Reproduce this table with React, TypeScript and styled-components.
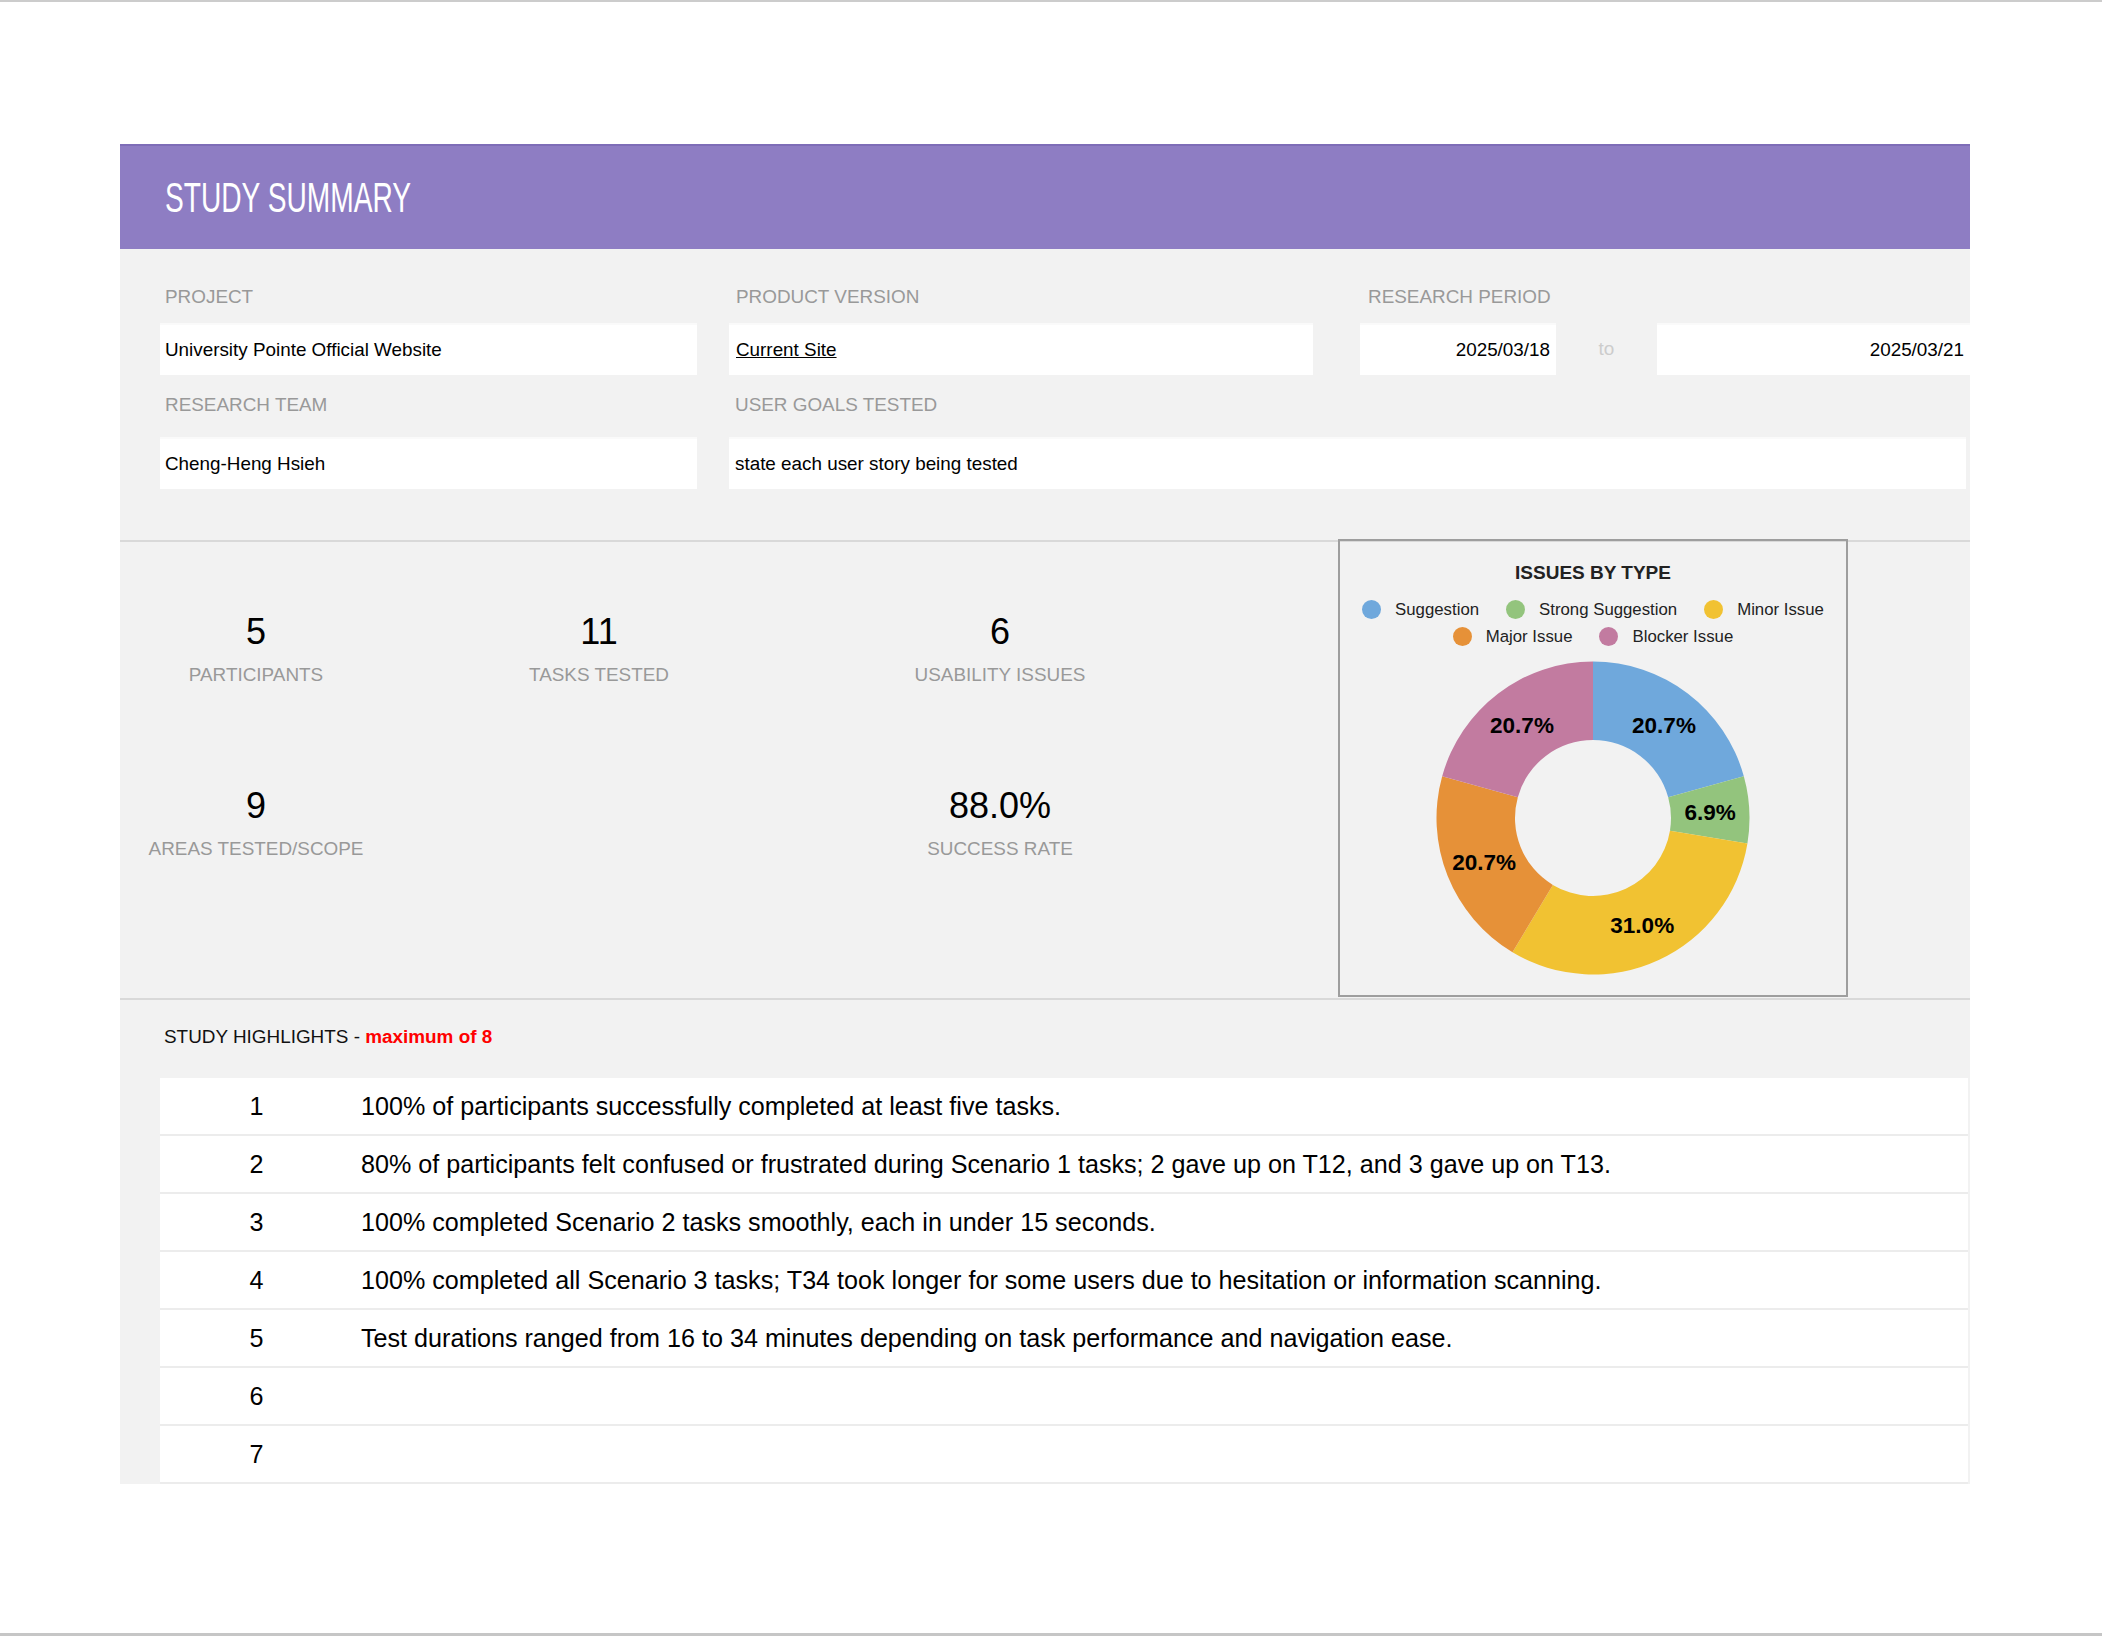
import React from 'react';
import styled, { createGlobalStyle } from 'styled-components';

const GlobalStyle = createGlobalStyle`
  html, body {
    margin: 0;
    padding: 0;
    background: #ffffff;
  }
  body {
    font-family: 'Liberation Sans', Arial, sans-serif;
    color: #000;
  }
`;

const Page = styled.div`
  min-height: 100vh;
  box-sizing: border-box;
  border-top: 2px solid #cccccc;
  border-bottom: 3px solid #c6c6c6;
  padding: 142px 0 0 120px;
`;

const Sheet = styled.div`
  width: 1850px;
  background: #f2f2f2;
`;

const Header = styled.div`
  height: 105px;
  box-sizing: border-box;
  background: #8e7dc3;
  border-top: 2px solid #7e6db7;
  display: flex;
  align-items: center;
  padding-left: 45px;
`;

const Title = styled.h1`
  margin: 0;
  font-size: 42px;
  font-weight: 400;
  line-height: 1;
  color: #ffffff;
  white-space: nowrap;
  transform: scaleX(0.67);
  transform-origin: left center;
`;

/* ---------- project info ---------- */

const Info = styled.div`
  padding: 37px 0 51px 40px;
`;

const FieldRow = styled.div<{ $top?: number }>`
  display: flex;
  gap: 32px;
  margin-top: ${p => p.$top ?? 0}px;
`;

const Field = styled.div<{ $w?: number; $ml?: number; $pad?: number }>`
  width: ${p => (p.$w ? `${p.$w}px` : 'auto')};
  margin-left: ${p => p.$ml ?? 0}px;
  --pad: ${p => p.$pad ?? 5}px;
`;

const Label = styled.div<{ $gap: number }>`
  font-size: 18.9px;
  line-height: 22px;
  color: #999999;
  padding-left: var(--pad);
  margin-bottom: ${p => p.$gap}px;
  white-space: nowrap;
`;

const ValueBox = styled.div<{ $w?: number; $right?: boolean }>`
  width: ${p => (p.$w ? `${p.$w}px` : '100%')};
  height: 52px;
  box-sizing: border-box;
  background: #ffffff;
  border-top: 2px solid #fafafa;
  display: flex;
  align-items: center;
  justify-content: ${p => (p.$right ? 'flex-end' : 'flex-start')};
  padding: 0 ${p => (p.$right ? '6px' : '0')} 0 ${p => (p.$right ? '0' : 'var(--pad)')};
  font-size: 18.85px;
  color: #000;
  white-space: nowrap;
`;

const LinkText = styled.span`
  text-decoration: underline;
`;

const PeriodRow = styled.div`
  display: flex;
`;

const ToSep = styled.div`
  width: 101px;
  height: 52px;
  display: flex;
  align-items: center;
  justify-content: center;
  font-size: 18.9px;
  color: #cccccc;
`;

/* ---------- stats + chart ---------- */

const Stats = styled.div`
  display: flex;
  height: 460px;
  box-sizing: border-box;
  border-top: 2px solid #d9d9d9;
  border-bottom: 2px solid #d9d9d9;
`;

const StatGrid = styled.div`
  flex: 0 0 1218px;
  display: grid;
  grid-template-columns: 272px 414px 388px;
  grid-auto-rows: 174px;
  padding-top: 72px;
  box-sizing: border-box;
`;

const StatCell = styled.div`
  display: flex;
  flex-direction: column;
  align-items: center;
`;

const StatNumber = styled.div`
  font-size: 36px;
  line-height: 1;
  color: #000;
`;

const StatLabel = styled.div`
  margin-top: 16px;
  font-size: 18.9px;
  line-height: 1;
  color: #999999;
  white-space: nowrap;
`;

const ChartBox = styled.div`
  width: 510px;
  height: 458px;
  margin-top: -3px;
  box-sizing: border-box;
  border: 2px solid #9e9e9e;
  padding-top: 22px;
  display: flex;
  flex-direction: column;
  align-items: center;
`;

const ChartTitle = styled.div`
  font-size: 19px;
  line-height: 19px;
  font-weight: 700;
  color: #222;
`;

const Legend = styled.div`
  margin-top: 14px;
  display: flex;
  flex-direction: column;
  align-items: center;
`;

const LegendRow = styled.div`
  display: flex;
  gap: 27px;
  height: 27px;
  align-items: center;
`;

const LegendItem = styled.div`
  display: flex;
  align-items: center;
  gap: 14px;
  font-size: 16.8px;
  color: #222;
  white-space: nowrap;
`;

const Dot = styled.span<{ $c: string }>`
  width: 19px;
  height: 19px;
  border-radius: 50%;
  background: ${p => p.$c};
  flex-shrink: 0;
`;

const Donut = styled.svg`
  margin-top: 8px;
  display: block;
`;

/* ---------- highlights ---------- */

const HighlightsHead = styled.div`
  height: 78px;
  box-sizing: border-box;
  padding: 26px 0 0 44px;
  font-size: 18.9px;
  line-height: 22px;
  color: #111;
`;

const Red = styled.span`
  color: #ff0000;
  font-weight: 700;
`;

const Table = styled.div`
  margin-left: 40px;
  width: 1808px;
`;

const Row = styled.div`
  display: flex;
  height: 58px;
  box-sizing: border-box;
  background: #ffffff;
  border-bottom: 2px solid #ececec;
`;

const NumCell = styled.div`
  width: 193px;
  flex-shrink: 0;
  display: flex;
  align-items: center;
  justify-content: center;
  font-size: 25.15px;
`;

const TextCell = styled.div`
  flex: 1;
  display: flex;
  align-items: center;
  padding-left: 8px;
  font-size: 25.15px;
  white-space: nowrap;
`;

const SEGMENTS = [
  { name: 'Suggestion', value: 20.7, color: '#6fa8dc' },
  { name: 'Strong Suggestion', value: 6.9, color: '#93c47d' },
  { name: 'Minor Issue', value: 31.0, color: '#f1c232' },
  { name: 'Major Issue', value: 20.7, color: '#e69138' },
  { name: 'Blocker Issue', value: 20.7, color: '#c27ba0' },
];

const HIGHLIGHTS = [
  '100% of participants successfully completed at least five tasks.',
  '80% of participants felt confused or frustrated during Scenario 1 tasks; 2 gave up on T12, and 3 gave up on T13.',
  '100% completed Scenario 2 tasks smoothly, each in under 15 seconds.',
  '100% completed all Scenario 3 tasks; T34 took longer for some users due to hesitation or information scanning.',
  'Test durations ranged from 16 to 34 minutes depending on task performance and navigation ease.',
  '',
  '',
];

const CX = 160;
const CY = 160;
const R_OUT = 156.5;
const R_IN = 78;

function pt(r: number, frac: number) {
  const a = frac * Math.PI * 2;
  return [CX + r * Math.sin(a), CY - r * Math.cos(a)];
}

function slicePath(from: number, to: number) {
  const large = to - from > 0.5 ? 1 : 0;
  const [x1, y1] = pt(R_OUT, from);
  const [x2, y2] = pt(R_OUT, to);
  const [x3, y3] = pt(R_IN, to);
  const [x4, y4] = pt(R_IN, from);
  return `M${x1} ${y1} A${R_OUT} ${R_OUT} 0 ${large} 1 ${x2} ${y2} L${x3} ${y3} A${R_IN} ${R_IN} 0 ${large} 0 ${x4} ${y4} Z`;
}

function IssuesChart() {
  const total = SEGMENTS.reduce((s, d) => s + d.value, 0);
  let acc = 0;
  const slices = SEGMENTS.map(d => {
    const from = acc / total;
    acc += d.value;
    const to = acc / total;
    const [lx, ly] = pt((R_OUT + R_IN) / 2, (from + to) / 2);
    return { ...d, from, to, lx, ly };
  });

  return (
    <ChartBox>
      <ChartTitle>ISSUES BY TYPE</ChartTitle>
      <Legend>
        <LegendRow>
          {SEGMENTS.slice(0, 3).map(s => (
            <LegendItem key={s.name}>
              <Dot $c={s.color} />
              {s.name}
            </LegendItem>
          ))}
        </LegendRow>
        <LegendRow>
          {SEGMENTS.slice(3).map(s => (
            <LegendItem key={s.name}>
              <Dot $c={s.color} />
              {s.name}
            </LegendItem>
          ))}
        </LegendRow>
      </Legend>
      <Donut width={320} height={320} viewBox="0 0 320 320">
        {slices.map(s => (
          <path key={s.name} d={slicePath(s.from, s.to)} fill={s.color} />
        ))}
        {slices.map(s => (
          <text
            key={s.name + '-l'}
            x={s.lx}
            y={s.ly + 1}
            textAnchor="middle"
            dominantBaseline="central"
            fontFamily="'Liberation Sans', Arial, sans-serif"
            fontWeight={700}
            fontSize={22.5}
            fill="#000"
          >
            {s.value.toFixed(1)}%
          </text>
        ))}
      </Donut>
    </ChartBox>
  );
}

export default function App() {
  return (
    <>
      <GlobalStyle />
      <Page>
        <Sheet>
          <Header>
            <Title>STUDY SUMMARY</Title>
          </Header>

          <Info>
            <FieldRow>
              <Field $w={537}>
                <Label $gap={15}>PROJECT</Label>
                <ValueBox>University Pointe Official Website</ValueBox>
              </Field>
              <Field $w={584} $pad={7}>
                <Label $gap={15}>PRODUCT VERSION</Label>
                <ValueBox>
                  <LinkText>Current Site</LinkText>
                </ValueBox>
              </Field>
              <Field $ml={15} $pad={8}>
                <Label $gap={15}>RESEARCH PERIOD</Label>
                <PeriodRow>
                  <ValueBox $w={196} $right>2025/03/18</ValueBox>
                  <ToSep>to</ToSep>
                  <ValueBox $w={313} $right>2025/03/21</ValueBox>
                </PeriodRow>
              </Field>
            </FieldRow>
            <FieldRow $top={19}>
              <Field $w={537}>
                <Label $gap={21}>RESEARCH TEAM</Label>
                <ValueBox>Cheng-Heng Hsieh</ValueBox>
              </Field>
              <Field $w={1237} $pad={6}>
                <Label $gap={21}>USER GOALS TESTED</Label>
                <ValueBox>state each user story being tested</ValueBox>
              </Field>
            </FieldRow>
          </Info>

          <Stats>
            <StatGrid>
              <StatCell>
                <StatNumber>5</StatNumber>
                <StatLabel>PARTICIPANTS</StatLabel>
              </StatCell>
              <StatCell>
                <StatNumber>11</StatNumber>
                <StatLabel>TASKS TESTED</StatLabel>
              </StatCell>
              <StatCell>
                <StatNumber>6</StatNumber>
                <StatLabel>USABILITY ISSUES</StatLabel>
              </StatCell>
              <StatCell>
                <StatNumber>9</StatNumber>
                <StatLabel>AREAS TESTED/SCOPE</StatLabel>
              </StatCell>
              <StatCell />
              <StatCell>
                <StatNumber>88.0%</StatNumber>
                <StatLabel>SUCCESS RATE</StatLabel>
              </StatCell>
            </StatGrid>
            <IssuesChart />
          </Stats>

          <HighlightsHead>
            STUDY HIGHLIGHTS - <Red>maximum of 8</Red>
          </HighlightsHead>
          <Table>
            {HIGHLIGHTS.map((h, i) => (
              <Row key={i}>
                <NumCell>{i + 1}</NumCell>
                <TextCell>{h}</TextCell>
              </Row>
            ))}
          </Table>
        </Sheet>
      </Page>
    </>
  );
}
